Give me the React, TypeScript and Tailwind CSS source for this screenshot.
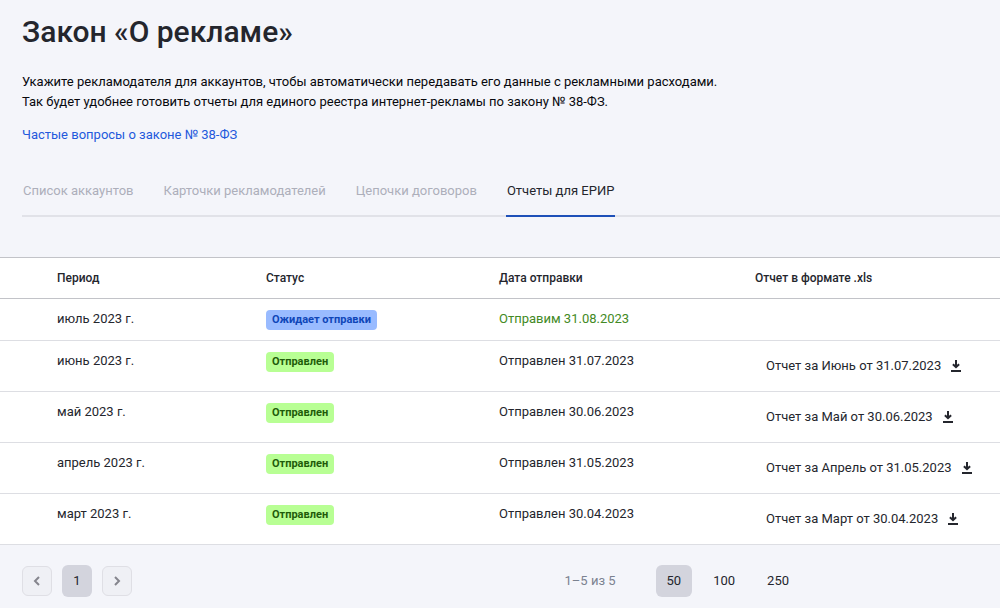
import React from "react";
import clsx from "clsx";

interface Report {
  period: string;
  status: "pending" | "sent";
  date: string;
  file?: string;
}

const tabs = [
  "Список аккаунтов",
  "Карточки рекламодателей",
  "Цепочки договоров",
  "Отчеты для ЕРИР",
];

const reports: Report[] = [
  { period: "июль 2023 г.", status: "pending", date: "Отправим 31.08.2023" },
  {
    period: "июнь 2023 г.",
    status: "sent",
    date: "Отправлен 31.07.2023",
    file: "Отчет за Июнь от 31.07.2023",
  },
  {
    period: "май 2023 г.",
    status: "sent",
    date: "Отправлен 30.06.2023",
    file: "Отчет за Май от 30.06.2023",
  },
  {
    period: "апрель 2023 г.",
    status: "sent",
    date: "Отправлен 31.05.2023",
    file: "Отчет за Апрель от 31.05.2023",
  },
  {
    period: "март 2023 г.",
    status: "sent",
    date: "Отправлен 30.04.2023",
    file: "Отчет за Март от 30.04.2023",
  },
];

const pageSizes = [50, 100, 250];

const DownloadIcon = () => (
  <svg width="10" height="12" viewBox="0 0 10 12" fill="none" stroke="currentColor">
    <path d="M5 0v7" strokeWidth="2" />
    <path d="M1.9 4.2 5 7.2l3.1-3" strokeWidth="2" />
    <path d="M0 11h10" strokeWidth="2" />
  </svg>
);

const Chevron = ({ direction }: { direction: "left" | "right" }) => (
  <svg width="8" height="10" viewBox="0 0 8 10" fill="none" stroke="currentColor" strokeWidth="2">
    <path d={direction === "left" ? "M6 1 2 5l4 4" : "M2 1l4 4-4 4"} />
  </svg>
);

const StatusBadge = ({ status }: { status: Report["status"] }) => (
  <span
    className={clsx(
      "inline-block rounded px-1.5 text-[11px] leading-5 font-bold",
      status === "pending"
        ? "bg-[#99bbff] text-[#0f46b8]"
        : "bg-[#b8ff94] text-[#1f5c0a]"
    )}
  >
    {status === "pending" ? "Ожидает отправки" : "Отправлен"}
  </span>
);

const ReportRow = ({ report }: { report: Report }) => (
  <tr className="border-b border-[#dddee3] align-top">
    <td className="py-2.5 pl-[57px]">{report.period}</td>
    <td className="pt-[11px] pb-2.5 pl-3">
      <div className="flex">
        <StatusBadge status={report.status} />
      </div>
    </td>
    <td
      className={clsx(
        "py-2.5 pl-[11px]",
        report.status === "pending" && "text-[#438a24]"
      )}
    >
      {report.date}
    </td>
    <td className={clsx("pl-[22px]", report.file && "py-[15px]")}>
      {report.file && (
        <a href="#" className="inline-flex h-5 items-center gap-2.5 align-top">
          {report.file}
          <DownloadIcon />
        </a>
      )}
    </td>
  </tr>
);

function Pagination() {
  return (
    <footer className="flex items-center px-[22px] pt-5 pb-3">
      <nav className="flex items-center gap-2.5" aria-label="Страницы">
        <button
          aria-label="Назад"
          className="flex size-[30px] items-center justify-center rounded-md border border-[#dfdfe5] bg-[#eff0f5] text-[#85858d]"
        >
          <Chevron direction="left" />
        </button>
        <button className="h-8 w-[30px] rounded-md bg-[#d3d4dd]">1</button>
        <button
          aria-label="Вперёд"
          className="flex size-[30px] items-center justify-center rounded-md border border-[#dfdfe5] bg-[#eff0f5] text-[#85858d]"
        >
          <Chevron direction="right" />
        </button>
      </nav>
      <div className="mr-[178px] ml-auto flex items-center">
        <span className="mr-10 text-[#7b8290]">1–5 из 5</span>
        <div className="flex gap-2.5">
          {pageSizes.map((size) => (
            <button
              key={size}
              className={clsx(
                "h-8 rounded-md px-[11px]",
                size === 50 && "bg-[#d3d4dd]"
              )}
            >
              {size}
            </button>
          ))}
        </div>
      </div>
    </footer>
  );
}

export default function App() {
  return (
    <main className="min-h-screen bg-[#f4f5fa] font-[Roboto,sans-serif] text-[13px] leading-5 text-[#24262d]">
      <header className="pt-3.5 pl-[22px]">
        <h1 className="text-3xl font-medium">Закон «О рекламе»</h1>
        <p className="mt-[22px] text-[#08090d]">
          Укажите рекламодателя для аккаунтов, чтобы автоматически передавать
          его данные с рекламными расходами.
          <br />
          Так будет удобнее готовить отчеты для единого реестра
          интернет-рекламы по закону № 38-ФЗ.
        </p>
        <a href="#" className="mt-[13px] inline-block align-top text-[#2359dc]">
          Частые вопросы о законе № 38-ФЗ
        </a>
        <div
          role="tablist"
          className="mt-6 flex gap-7 border-b-2 border-[#e1e2e8]"
        >
          {tabs.map((tab, i) => (
            <button
              key={tab}
              role="tab"
              aria-selected={i === 3}
              className={clsx(
                "-mb-0.5 h-12 border-b-2 px-px pb-[3px]",
                i === 3
                  ? "border-[#1e50b8]"
                  : "border-transparent text-[#adafba]"
              )}
            >
              {tab}
            </button>
          ))}
        </div>
      </header>

      <table className="mt-10 w-full table-fixed border-collapse bg-white">
        <colgroup>
          <col className="w-[254px]" />
          <col className="w-[234px]" />
          <col className="w-[256px]" />
          <col />
        </colgroup>
        <thead>
          <tr className="border-y border-[#c2c3c8] text-left text-xs leading-5">
            <th className="py-2.5 pl-[57px] font-medium">Период</th>
            <th className="py-2.5 pl-3 font-medium">Статус</th>
            <th className="py-2.5 pl-[11px] font-medium">Дата отправки</th>
            <th className="py-2.5 pl-[11px] font-medium">
              Отчет в формате .xls
            </th>
          </tr>
        </thead>
        <tbody>
          {reports.map((report) => (
            <ReportRow key={report.period} report={report} />
          ))}
        </tbody>
      </table>

      <Pagination />
    </main>
  );
}
